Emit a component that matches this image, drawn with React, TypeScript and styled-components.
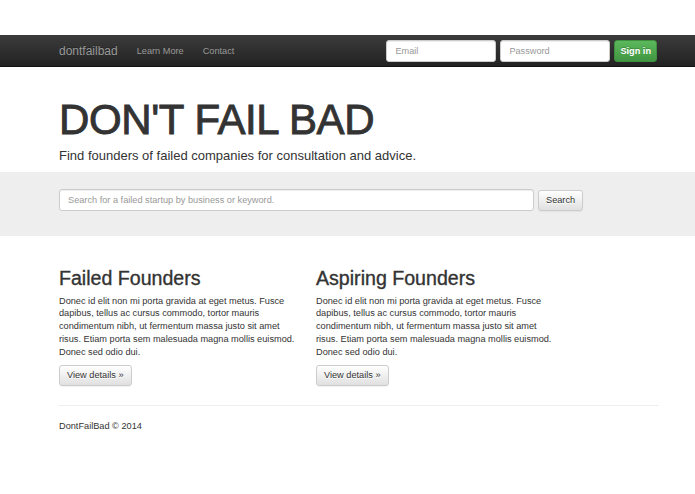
import React from "react";
import styled, { createGlobalStyle } from "styled-components";

const GlobalStyle = createGlobalStyle`
  * {
    box-sizing: border-box;
  }

  body {
    margin: 0;
    background: #fff;
    color: #333;
    font-family: "Liberation Sans", Arial, Helvetica, sans-serif;
  }
`;

const Page = styled.div`
  padding-top: 35px;
`;

const Container = styled.div`
  width: 600px;
  margin-left: 59px;
`;

const NavBar = styled.nav`
  height: 32px;
  background: linear-gradient(to bottom, #3c3c3c 0%, #222 100%);
  border-bottom: 1px solid #111;
`;

const NavInner = styled(Container)`
  display: flex;
  align-items: center;
  height: 100%;
`;

const Brand = styled.a`
  color: #999;
  font-size: 12px;
  text-decoration: none;
  margin-right: 19px;
  text-shadow: 0 -1px 0 rgba(0, 0, 0, 0.25);
`;

const NavLink = styled.a`
  color: #999;
  font-size: 9.2px;
  text-decoration: none;
  margin-right: 19px;
`;

const SignInForm = styled.form`
  margin-left: auto;
  margin-right: 2px;
  display: flex;
  gap: 4px;
  align-items: center;
`;

const TextField = styled.input<{ $width: number }>`
  width: ${(p) => p.$width}px;
  height: 22px;
  padding: 0 8px;
  border: 1px solid #ccc;
  border-radius: 3px;
  background: #fff;
  font-family: inherit;
  font-size: 9.2px;
  color: #555;
  box-shadow: inset 0 1px 1px rgba(0, 0, 0, 0.075);

  &::placeholder {
    color: #999;
  }
`;

const Button = styled.button<{ $variant?: "success" | "default" }>`
  height: ${(p) => (p.$variant === "success" ? 22 : 21)}px;
  padding: 0 ${(p) => (p.$variant === "success" ? 5 : 7)}px;
  border-radius: 3px;
  font-family: inherit;
  font-size: 9.2px;
  cursor: pointer;
  white-space: nowrap;
  ${(p) =>
    p.$variant === "success"
      ? `
    color: #fff;
    font-weight: bold;
    border: 1px solid #3e8f3e;
    background: linear-gradient(to bottom, #5cb85c 0%, #419641 100%);
    text-shadow: 0 -1px 0 rgba(0, 0, 0, 0.2);
  `
      : `
    color: #333;
    border: 1px solid #ccc;
    background: linear-gradient(to bottom, #fff 0%, #e0e0e0 100%);
    text-shadow: 0 1px 0 #fff;
    box-shadow: 0 1px 1px rgba(0, 0, 0, 0.05);
  `}
`;

const Hero = styled.header`
  padding: 30px 0 9px;
`;

const Title = styled.h1`
  margin: 0;
  font-size: 42px;
  font-weight: normal;
  line-height: 1.1;
  letter-spacing: -0.4px;
  color: #333;
  -webkit-text-stroke: 0.9px #333;
`;

const Lead = styled.p`
  margin: 5px 0 0;
  font-size: 13px;
  color: #333;
`;

const SearchBand = styled.section`
  background: #eee;
  padding: 17px 0 25px;
`;

const SearchRow = styled.form`
  display: flex;
  gap: 4px;
  align-items: center;
`;

const Columns = styled.div`
  display: grid;
  grid-template-columns: 257px 245px;
  padding-top: 31px;
`;

const Column = styled.div`
  width: 245px;
`;

const ColumnTitle = styled.h2`
  margin: 0 0 4px;
  font-size: 19.6px;
  font-weight: normal;
  line-height: 1.2;
  color: #333;
  -webkit-text-stroke: 0.35px #333;
`;

const Body = styled.p`
  margin: 0 0 6px;
  font-size: 9.2px;
  line-height: 12.75px;
  color: #333;
`;

const Footer = styled.footer`
  margin-top: 19px;
  border-top: 1px solid #eee;
  padding-top: 15px;
  font-size: 9.2px;
  color: #333;
`;

const lorem =
  "Donec id elit non mi porta gravida at eget metus. Fusce dapibus, tellus ac cursus commodo, tortor mauris condimentum nibh, ut fermentum massa justo sit amet risus. Etiam porta sem malesuada magna mollis euismod. Donec sed odio dui.";

const sections = ["Failed Founders", "Aspiring Founders"];

export default function App() {
  return (
    <Page>
      <GlobalStyle />
      <NavBar>
        <NavInner>
          <Brand href="#">dontfailbad</Brand>
          <NavLink href="#">Learn More</NavLink>
          <NavLink href="#">Contact</NavLink>
          <SignInForm onSubmit={(e) => e.preventDefault()}>
            <TextField $width={110} type="text" placeholder="Email" />
            <TextField $width={110} type="password" placeholder="Password" />
            <Button $variant="success" type="submit">
              Sign in
            </Button>
          </SignInForm>
        </NavInner>
      </NavBar>

      <Hero>
        <Container>
          <Title>DON'T FAIL BAD</Title>
          <Lead>Find founders of failed companies for consultation and advice.</Lead>
        </Container>
      </Hero>

      <SearchBand>
        <Container>
          <SearchRow onSubmit={(e) => e.preventDefault()}>
            <TextField
              $width={475}
              type="text"
              placeholder="Search for a failed startup by business or keyword."
            />
            <Button type="submit">Search</Button>
          </SearchRow>
        </Container>
      </SearchBand>

      <Container>
        <Columns>
          {sections.map((title) => (
            <Column key={title}>
              <ColumnTitle>{title}</ColumnTitle>
              <Body>{lorem}</Body>
              <Button type="button">View details »</Button>
            </Column>
          ))}
        </Columns>
        <Footer>DontFailBad © 2014</Footer>
      </Container>
    </Page>
  );
}
